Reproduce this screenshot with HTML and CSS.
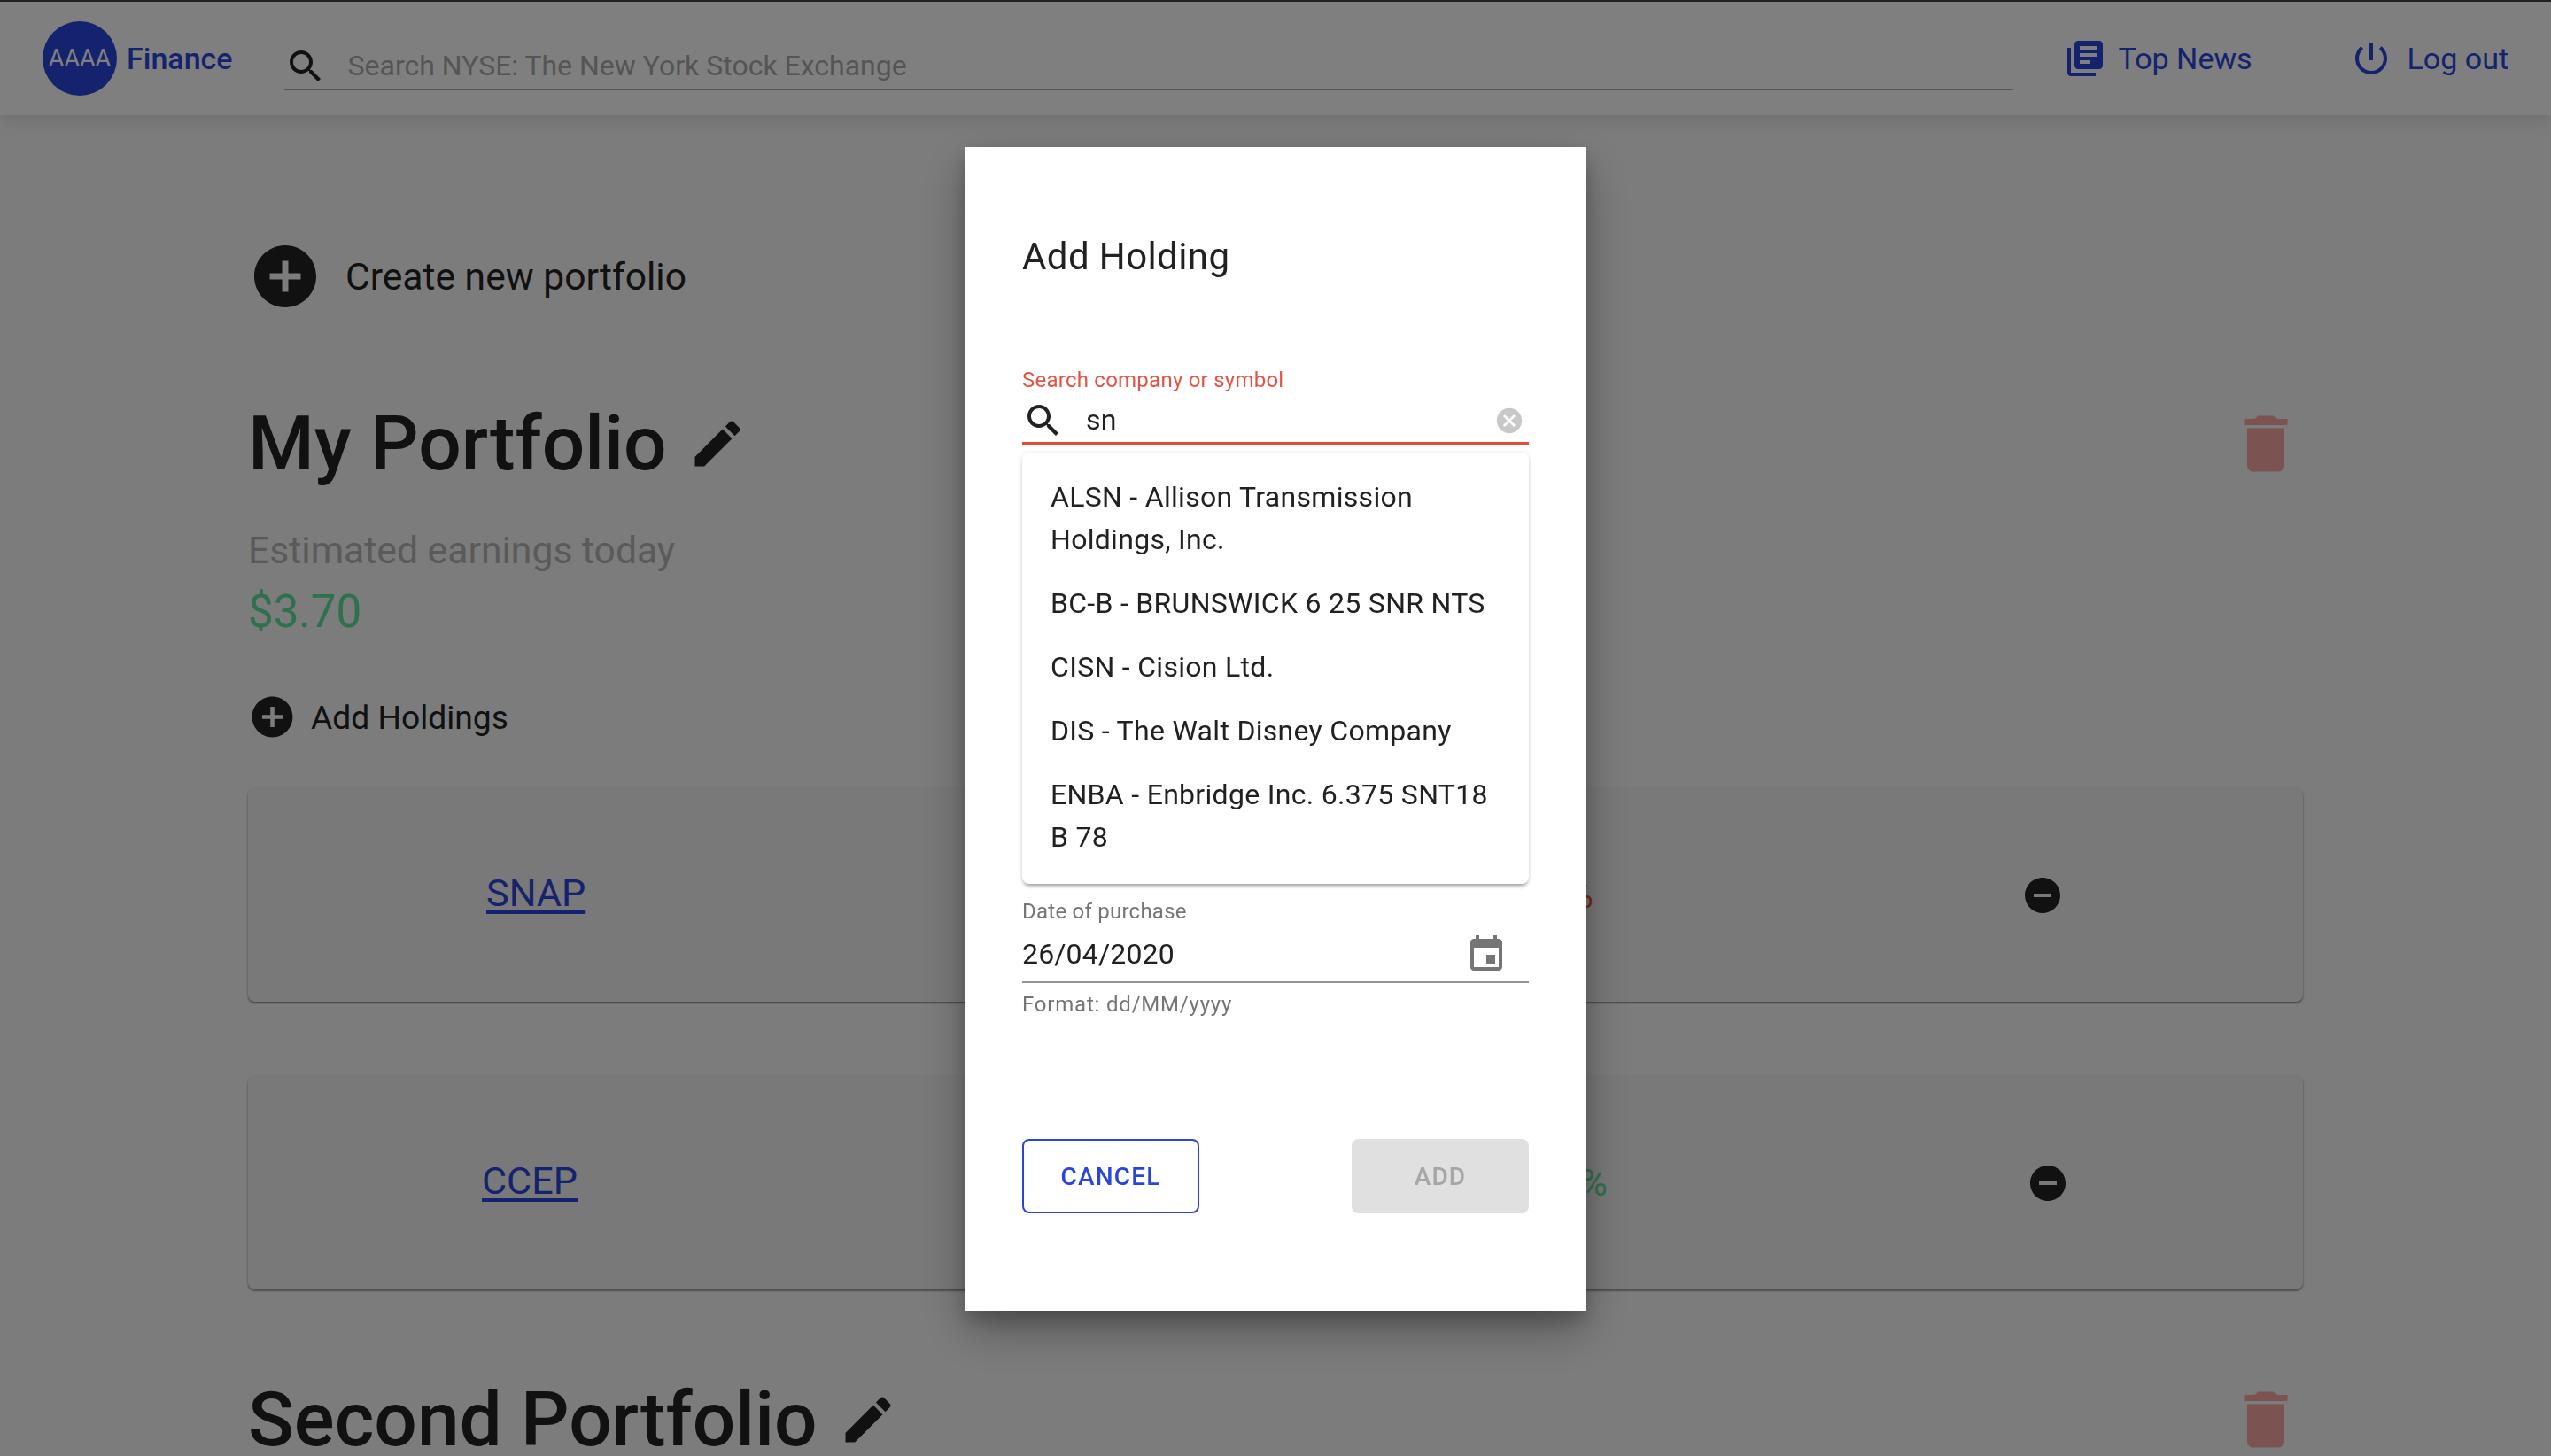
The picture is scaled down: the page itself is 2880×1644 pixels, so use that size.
FILE: index.html
```html
<!DOCTYPE html>
<html lang="en">
<head>
  <meta charset="UTF-8" />
  <title>AAAA Finance</title>
  <link rel="stylesheet" href="styles.css">
</head>
<body>

  <header class="topbar">
    <div class="logo">AAAA</div>
    <span class="brand">Finance</span>
    <div class="top-search">
      <svg class="icon-48 icon-dark" viewBox="0 0 24 24"><path d="M15.5 14h-.79l-.28-.27C15.41 12.59 16 11.11 16 9.5 16 5.91 13.09 3 9.5 3S3 5.91 3 9.5 5.91 16 9.5 16c1.61 0 3.09-.59 4.23-1.57l.27.28v.79l5 4.99L20.49 19l-4.99-5zm-6 0C7.01 14 5 11.99 5 9.5S7.01 5 9.5 5 14 7.01 14 9.5 11.99 14 9.5 14z"/></svg>
      <span class="top-search-text">Search NYSE: The New York Stock Exchange</span>
    </div>
    <a class="nav-link nav-news" href="#">
      <svg class="icon-48" viewBox="0 0 24 24"><path d="M4 6H2v14c0 1.1.9 2 2 2h14v-2H4V6zm16-4H8c-1.1 0-2 .9-2 2v12c0 1.1.9 2 2 2h12c1.1 0 2-.9 2-2V4c0-1.1-.9-2-2-2zm-1 9H9V9h10v2zm-4 4H9v-2h6v2zm4-8H9V5h10v2z"/></svg>
      Top News
    </a>
    <a class="nav-link nav-logout" href="#">
      <svg class="icon-48" viewBox="0 0 24 24"><path d="M13 3h-2v10h2V3zm4.83 2.17l-1.42 1.42C17.99 7.86 19 9.81 19 12c0 3.87-3.13 7-7 7s-7-3.13-7-7c0-2.19 1.01-4.14 2.58-5.42L6.17 5.17C4.23 6.82 3 9.26 3 12c0 4.97 4.03 9 9 9s9-4.03 9-9c0-2.74-1.23-5.18-3.17-6.83z"/></svg>
      Log out
    </a>
  </header>

  <main class="page">
    <div class="create-row">
      <svg class="icon-84 icon-dark" viewBox="0 0 24 24"><path d="M12 2C6.48 2 2 6.48 2 12s4.48 10 10 10 10-4.48 10-10S17.52 2 12 2zm5 11h-4v4h-2v-4H7v-2h4V7h2v4h4v2z"/></svg>
      <span>Create new portfolio</span>
    </div>

    <section>
      <div class="portfolio-head">
        <h2>My Portfolio</h2>
        <svg class="icon-edit" viewBox="0 0 24 24"><path d="M3 17.25V21h3.75L17.81 9.94l-3.75-3.75L3 17.25zM20.71 7.04c.39-.39.39-1.02 0-1.41l-2.34-2.34c-.39-.39-1.02-.39-1.41 0l-1.83 1.83 3.75 3.75 1.83-1.83z"/></svg>
        <svg class="icon-84 icon-trash" viewBox="0 0 24 24"><path d="M6 19c0 1.1.9 2 2 2h8c1.1 0 2-.9 2-2V7H6v12zM19 4h-3.5l-1-1h-5l-1 1H5v2h14V4z"/></svg>
      </div>
      <div class="earn-label">Estimated earnings today</div>
      <div class="earn-value">$3.70</div>
      <div class="add-row">
        <svg class="icon-add" viewBox="0 0 24 24"><path d="M12 2C6.48 2 2 6.48 2 12s4.48 10 10 10 10-4.48 10-10S17.52 2 12 2zm5 11h-4v4h-2v-4H7v-2h4V7h2v4h4v2z"/></svg>
        <span>Add Holdings</span>
      </div>

      <div class="holding holding-snap">
        <a class="symbol" href="#">SNAP</a>
        <span class="change change-down">-1.25%</span>
        <svg class="icon-48 icon-dark" viewBox="0 0 24 24"><path d="M12 2C6.48 2 2 6.48 2 12s4.48 10 10 10 10-4.48 10-10S17.52 2 12 2zm5 11H7v-2h10v2z"/></svg>
      </div>
      <div class="holding holding-ccep">
        <a class="symbol" href="#">CCEP</a>
        <span class="change change-up">+1.25%</span>
        <svg class="icon-48 icon-dark" viewBox="0 0 24 24"><path d="M12 2C6.48 2 2 6.48 2 12s4.48 10 10 10 10-4.48 10-10S17.52 2 12 2zm5 11H7v-2h10v2z"/></svg>
      </div>
    </section>

    <section>
      <div class="portfolio-head">
        <h2>Second Portfolio</h2>
        <svg class="icon-edit" viewBox="0 0 24 24"><path d="M3 17.25V21h3.75L17.81 9.94l-3.75-3.75L3 17.25zM20.71 7.04c.39-.39.39-1.02 0-1.41l-2.34-2.34c-.39-.39-1.02-.39-1.41 0l-1.83 1.83 3.75 3.75 1.83-1.83z"/></svg>
        <svg class="icon-84 icon-trash" viewBox="0 0 24 24"><path d="M6 19c0 1.1.9 2 2 2h8c1.1 0 2-.9 2-2V7H6v12zM19 4h-3.5l-1-1h-5l-1 1H5v2h14V4z"/></svg>
      </div>
    </section>
  </main>

  <div class="overlay">
    <div class="modal">
      <h3>Add Holding</h3>

      <label class="field-label field-label-error">Search company or symbol</label>
      <div class="search-field">
        <svg class="icon-48 icon-text" viewBox="0 0 24 24"><path d="M15.5 14h-.79l-.28-.27C15.41 12.59 16 11.11 16 9.5 16 5.91 13.09 3 9.5 3S3 5.91 3 9.5 5.91 16 9.5 16c1.61 0 3.09-.59 4.23-1.57l.27.28v.79l5 4.99L20.49 19l-4.99-5zm-6 0C7.01 14 5 11.99 5 9.5S7.01 5 9.5 5 14 7.01 14 9.5 11.99 14 9.5 14z"/></svg>
        <span class="search-value">sn</span>
        <svg class="icon-clear" viewBox="0 0 24 24"><path d="M12 2C6.47 2 2 6.47 2 12s4.47 10 10 10 10-4.47 10-10S17.53 2 12 2zm5 13.59L15.59 17 12 13.41 8.41 17 7 15.59 10.59 12 7 8.41 8.41 7 12 10.59 15.59 7 17 8.41 13.41 12 17 15.59z"/></svg>
      </div>

      <ul class="options">
        <li>ALSN - Allison Transmission Holdings, Inc.</li>
        <li>BC-B - BRUNSWICK 6 25 SNR NTS</li>
        <li>CISN - Cision Ltd.</li>
        <li>DIS - The Walt Disney Company</li>
        <li>ENBA - Enbridge Inc. 6.375 SNT18 B 78</li>
      </ul>

      <label class="field-label field-label-date">Date of purchase</label>
      <div class="date-field">
        <span>26/04/2020</span>
        <svg class="icon-48 icon-calendar" viewBox="0 0 24 24"><path d="M17 12h-5v5h5v-5zM16 1v2H8V1H6v2H5c-1.11 0-1.99.9-1.99 2L3 19c0 1.1.89 2 2 2h14c1.1 0 2-.9 2-2V5c0-1.1-.9-2-2-2h-1V1h-2zm3 18H5V8h14v11z"/></svg>
      </div>
      <div class="field-help">Format: dd/MM/yyyy</div>

      <div class="modal-actions">
        <button class="btn btn-outline">Cancel</button>
        <button class="btn btn-disabled" disabled>Add</button>
      </div>
    </div>
  </div>

</body>
</html>
```

FILE: styles.css
```css
* {
  box-sizing: border-box;
}

html, body {
  height: 100%;
}

body {
  font-family: Roboto, sans-serif;
  margin: 0;
  padding: 0;
  background: #f8f8f8;
  color: #222;
  overflow: hidden;
}

svg {
  fill: currentColor;
  flex: none;
  display: block;
}

.icon-48 { width: 48px; height: 48px; }
.icon-84 { width: 84px; height: 84px; }
.icon-dark { color: #222; }
.icon-text { color: #212121; }
.icon-trash { color: #f6a6a0; margin-left: auto; }
.icon-edit { width: 68px; height: 68px; color: #222; margin-left: 23px; }
.icon-add { width: 55px; height: 55px; color: #222; }
.icon-clear { width: 34px; height: 34px; color: #c8c8c8; margin-left: auto; margin-right: 5px; }
.icon-calendar { color: #757575; margin-left: auto; margin-right: 24px; margin-top: 2px; }

/* top bar */
.topbar {
  display: flex;
  align-items: center;
  height: 130px;
  padding: 0 48px;
  background: #fff;
  border-top: 2px solid #444;
  box-shadow: 0 4px 20px rgba(0, 0, 0, 0.12);
  position: relative;
}

.logo {
  width: 84px;
  height: 84px;
  border-radius: 50%;
  background: #2a45dc;
  color: #fff;
  font-size: 27px;
  display: flex;
  align-items: center;
  justify-content: center;
}

.brand {
  color: #2a45dc;
  font-size: 34px;
  font-weight: 500;
  margin-left: 11px;
}

.top-search {
  flex: 1;
  display: flex;
  align-items: center;
  height: 52px;
  margin: 20px 57px 0 58px;
  border-bottom: 2px solid #aaa;
  font-size: 32px;
  color: #aaa;
}

.top-search-text {
  margin-left: 24px;
  margin-top: -3px;
}

.nav-link {
  display: flex;
  align-items: center;
  color: #2a45dc;
  font-size: 34px;
  text-decoration: none;
}

.nav-news svg { margin-right: 14px; }
.nav-logout { margin-left: 110px; }
.nav-logout svg { margin-right: 17px; }

/* portfolios */
.page {
  padding: 140px 280px 0;
}

.create-row {
  display: flex;
  align-items: center;
  gap: 26px;
  font-size: 42.6px;
}

.portfolio-head {
  display: flex;
  align-items: center;
  height: 84px;
  margin-top: 105px;
}

.portfolio-head h2 {
  margin: 0;
  font-size: 85.6px;
  font-weight: 500;
  line-height: 84px;
}

.earn-label {
  margin-top: 50px;
  font-size: 42.7px;
  line-height: 56px;
  color: #b4b4b4;
}

.earn-value {
  margin-top: 7px;
  font-size: 51px;
  line-height: 70px;
  color: #5fe09c;
}

.add-row {
  display: flex;
  align-items: center;
  gap: 16px;
  margin-top: 56px;
  font-size: 37.2px;
}

.holding {
  display: flex;
  align-items: center;
  height: 241px;
  margin-top: 84px;
  background: #f2f2f2;
  border-radius: 8px;
  box-shadow: 0 2px 2px rgba(0, 0, 0, 0.28), 0 1px 3px rgba(0, 0, 0, 0.2);
}

.add-row + .holding {
  margin-top: 53px;
}

.holding-snap { padding: 0 270px 0 269px; }
.holding-ccep { padding: 0 264px 0 264px; }

.symbol {
  color: #2a45dc;
  font-size: 43.2px;
  text-decoration-thickness: 4px;
  text-underline-offset: 5px;
  margin-top: -4px;
}

.change {
  margin-left: auto;
  font-size: 42px;
}

.change-down { color: #f2583c; margin-right: 483px; }
.change-up { color: #5fe09c; margin-right: 473px; }

/* dialog */
.overlay {
  position: fixed;
  top: 0;
  left: 0;
  right: 0;
  bottom: 0;
  display: flex;
  justify-content: center;
  align-items: flex-start;
  padding-top: 166px;
  background: rgba(0, 0, 0, 0.5);
}

.modal {
  width: 700px;
  padding: 96px 64px 110px;
  background: #fff;
  box-shadow: 0 22px 48px rgba(0, 0, 0, 0.3), 0 10px 20px rgba(0, 0, 0, 0.2);
}

.modal h3 {
  margin: 0;
  font-size: 42px;
  font-weight: 400;
  letter-spacing: 0.4px;
  line-height: 56px;
  color: #212121;
}

.field-label {
  display: block;
  font-size: 24px;
  letter-spacing: 0.24px;
  line-height: 32px;
  color: #757575;
}

.field-label-error {
  margin-top: 95px;
  color: #e65244;
}

.field-label-date {
  margin-top: 15px;
}

.search-field {
  display: flex;
  align-items: center;
  padding-top: 6px;
  height: 58px;
  border-bottom: 4px solid #e04e3b;
}

.search-value {
  margin-left: 24px;
  margin-top: -3px;
  font-size: 32px;
  letter-spacing: 0.3px;
  color: #212121;
}

.options {
  list-style: none;
  margin: 8px 0 0;
  padding: 14px 0 17px;
  background: #fff;
  border-radius: 8px;
  box-shadow: 0 4px 4px -2px rgba(0, 0, 0, 0.35), 0 1px 6px rgba(0, 0, 0, 0.12);
}

.options li {
  padding: 12px 32px;
  font-size: 32px;
  letter-spacing: 0.3px;
  line-height: 48px;
  color: #212121;
}

.date-field {
  display: flex;
  align-items: center;
  height: 65px;
  border-bottom: 2px solid #949494;
  font-size: 32px;
  letter-spacing: 0.15px;
  color: #212121;
}

.field-help {
  margin-top: 8px;
  font-size: 24px;
  letter-spacing: 0.8px;
  line-height: 32px;
  color: #757575;
}

.modal-actions {
  display: flex;
  justify-content: space-between;
  margin-top: 136px;
}

.btn {
  width: 200px;
  height: 84px;
  border-radius: 8px;
  font-family: Roboto, sans-serif;
  font-size: 28px;
  font-weight: 500;
  letter-spacing: 1.2px;
  text-transform: uppercase;
}

.btn-outline {
  background: #fff;
  border: 2px solid #2a45dc;
  color: #2a45dc;
}

.btn-disabled {
  background: #e0e0e0;
  border: 0;
  color: #a6a6a6;
}
```
